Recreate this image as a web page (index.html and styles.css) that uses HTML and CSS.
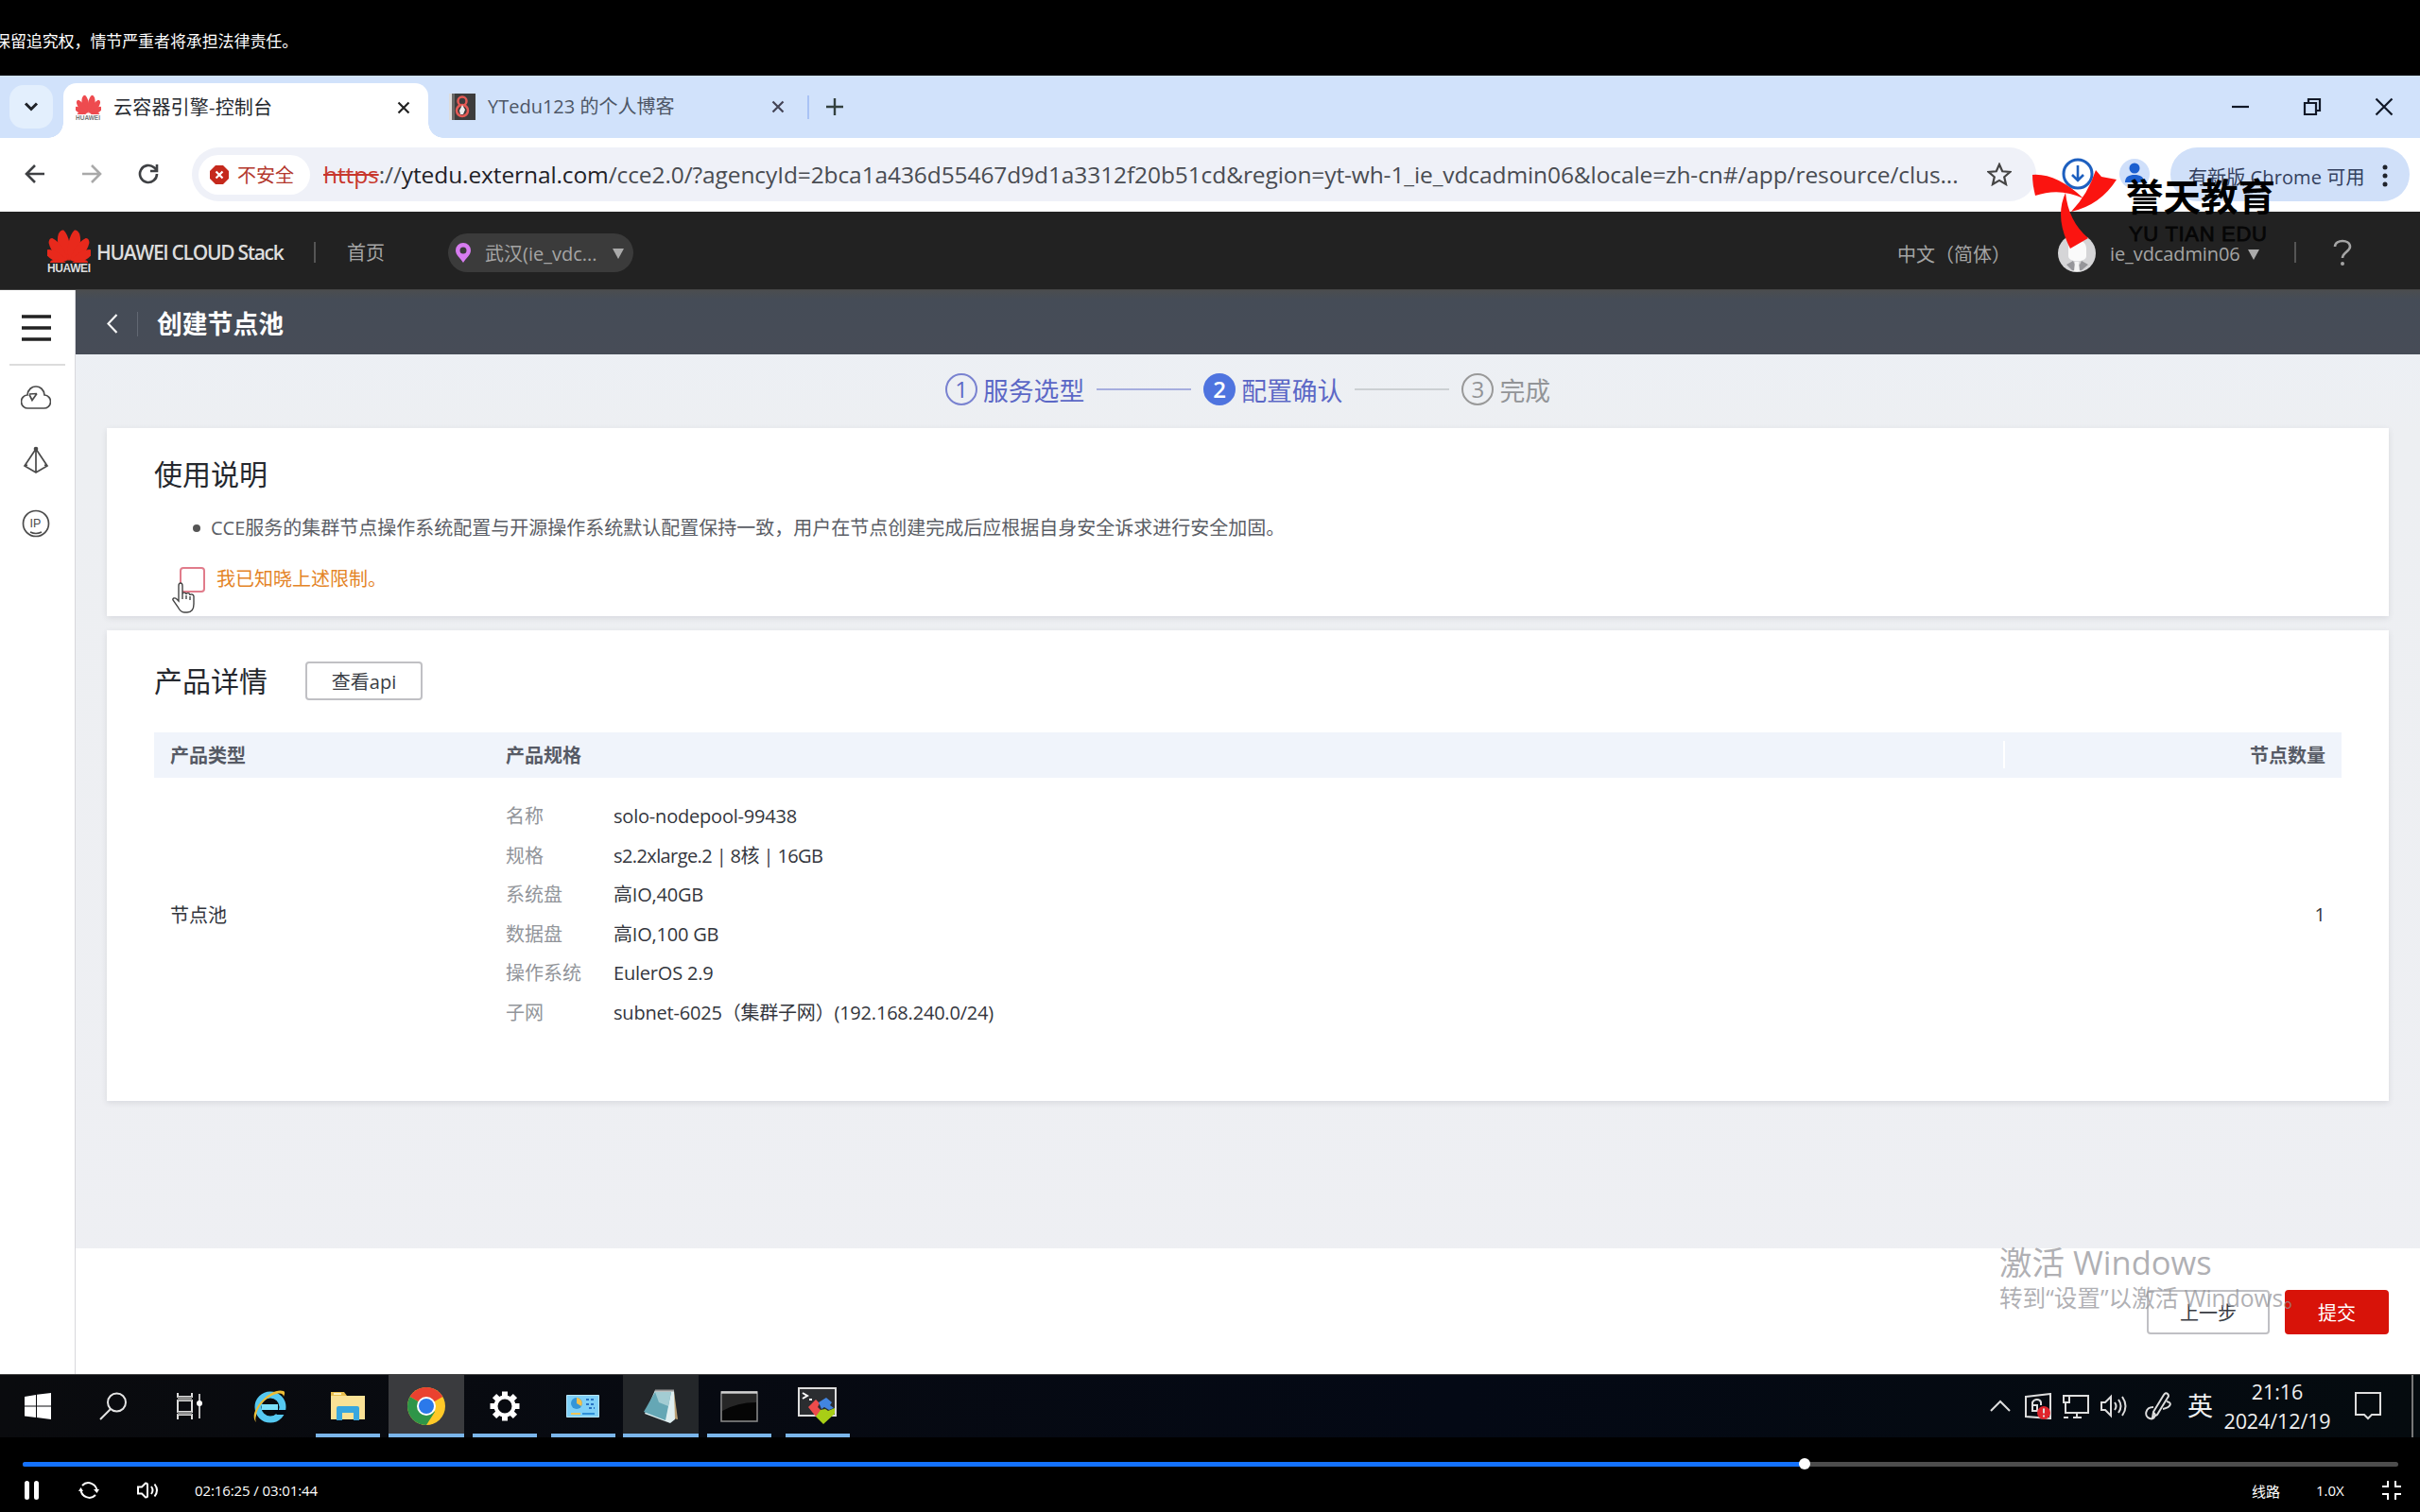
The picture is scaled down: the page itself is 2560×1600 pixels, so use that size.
FILE: index.html
```html
<!DOCTYPE html>
<html lang="zh-CN">
<head>
<meta charset="utf-8">
<title>云容器引擎-控制台</title>
<link rel="stylesheet" href="styles.css">
</head>
<body>
<svg class="defs" width="0" height="0">
  <symbol id="flower" viewBox="0 0 46 36" preserveAspectRatio="none">
    <g id="half">
      <path transform="translate(22.5 34) rotate(-11)" d="M0 0C-7-9-10-21-5-30Q-2-34 1-33C6-26 6-10 0 0Z"/>
      <path transform="translate(21.5 34) rotate(-36)" d="M0 0C-7-8-9-18-5-27Q-2-31 1-29C5-22 5-9 0 0Z"/>
      <path transform="translate(20.5 34) rotate(-61)" d="M0 0C-6-6-8-14-5-21Q-2-25 1-23C4-17 4-7 0 0Z"/>
      <path transform="translate(19.500 35.500) rotate(-86)" d="M0 0C-4-4-5-10-3-15Q-1-18 1-15C3-11 2-4 0 0Z"/>
    </g>
    <use href="#half" transform="translate(46 0) scale(-1 1)"/>
  </symbol>
</svg>
<div class="notice"><span>保留追究权，情节严重者将承担法律责任。</span></div>

<div class="tabs">
  <div class="tab-search"><svg width="16" height="10" viewBox="0 0 16 10"><path d="M2 1.5l6 6 6-6" fill="none" stroke="#1f2228" stroke-width="3"/></svg></div>
  <div class="tab active">
    <div class="fav"><svg width="27" height="21"><use href="#flower"/></svg><b>HUAWEI</b></div>
    <span class="tab-title">云容器引擎-控制台</span>
    <svg class="x" width="14" height="14" viewBox="0 0 14 14"><path d="M1.500 1.500l11 11M12.500 1.500l-11 11"/></svg>
  </div>
  <div class="tab second">
    <svg width="28" height="28" viewBox="0 0 28 28"><path fill="#3d3c3c" d="M0 0h28v28H0z"/><path fill="#ddd" d="M0 0h3v28H0z"/><path fill="#6b6968" d="M3 0h3v28H3z"/><g fill="none" stroke="#e55a55" stroke-width="2.500"><circle cx="14" cy="8" r="4.500"/><circle cx="14" cy="18" r="6"/></g><path d="M14 12l3 5-2 5h-3l-1-4z" fill="#eee"/></svg>
    <span class="tab-title">YTedu123 的个人博客</span>
    <svg class="x" width="14" height="14" viewBox="0 0 14 14"><path d="M1.500 1.500l11 11M12.500 1.500l-11 11"/></svg>
  </div>
  <i class="tab-sep"></i>
  <svg class="plus" width="18" height="18" viewBox="0 0 18 18"><path d="M9 0v18M0 9h18"/></svg>
  <div class="win">
    <svg width="20" height="20" viewBox="0 0 20 20"><path d="M1 10h18"/></svg>
    <svg width="20" height="20" viewBox="0 0 20 20"><path d="M2 6h12v12H2zM6 6V2h12v12h-4"/></svg>
    <svg width="20" height="20" viewBox="0 0 20 20"><path d="M1.500 1.500l17 17M18.500 1.500l-17 17"/></svg>
  </div>
</div>

<div class="toolbar">
  <svg class="nav-ic" width="22" height="22" viewBox="0 0 22 22"><path d="M21 11H2M11 2L2 11l9 9"/></svg>
  <svg class="nav-ic dim" width="22" height="22" viewBox="0 0 22 22"><path d="M1 11h19M11 2l9 9-9 9"/></svg>
  <svg class="nav-ic" width="22" height="22" viewBox="0 0 22 22"><path d="M20 11a9 9 0 1 1-3-6.700L20 7M20 1v7h-7"/></svg>
  <div class="omni">
    <div class="chip">
      <svg width="20" height="20" viewBox="0 0 20 20"><path fill="#c5291c" d="M6 0h8l6 6v8l-6 6H6l-6-6V6z"/><path d="M6.500 6.500l7 7M13.500 6.500l-7 7" stroke="#fff" stroke-width="2.200"/></svg>
      <span>不安全</span>
    </div>
    <div class="url"><s>https</s>://<b>ytedu.external.com</b>/cce2.0/?agencyId=2bca1a436d55467d9d1a3312f20b51cd&amp;region=yt-wh-1_ie_vdcadmin06&amp;locale=zh-cn#/app/resource/clus...</div>
    <svg width="26" height="25" viewBox="0 0 26 25"><path d="M13 2l3.200 7.300 8 .7-6 5.300 1.800 7.700-7-4.100-7 4.100 1.800-7.700-6-5.300 8-.7z" fill="none" stroke="#444" stroke-width="2.200"/></svg>
  </div>
  <svg class="dl" width="34" height="34" viewBox="0 0 34 34"><g fill="none" stroke="#1d5fbf" stroke-width="3"><circle cx="17" cy="17" r="15"/><path stroke-width="2.600" d="M17 8v16M11 18l6 6 6-6"/></g></svg>
  <svg class="me" width="32" height="32" viewBox="0 0 32 32"><circle cx="16" cy="16" r="16" fill="#cfdffa"/><circle cx="16" cy="10" r="5.500" fill="#1b5fd0"/><path d="M6 25c0-6 4-8 10-8s10 2 10 8z" fill="#1b5fd0"/></svg>
  <div class="update"><span>有新版 Chrome 可用</span><svg width="6" height="24" viewBox="0 0 6 24" fill="#20242c"><circle cx="3" cy="3" r="2.500"/><circle cx="3" cy="12" r="2.500"/><circle cx="3" cy="21" r="2.500"/></svg></div>
</div>

<div class="cloudbar">
  <div class="logo"><svg width="46" height="36"><use href="#flower"/></svg><b>HUAWEI</b></div>
  <span class="brand">HUAWEI CLOUD Stack</span>
  <i class="bar-sep"></i>
  <span class="home">首页</span>
  <div class="region">
    <svg width="16" height="21" viewBox="0 0 16 21"><path fill="#d77cf0" fill-rule="evenodd" d="M8 0a8 8 0 0 1 8 8c0 5-5 8-8 13C5 16 0 13 0 8a8 8 0 0 1 8-8zm0 4.500a3.500 3.500 0 1 0 0 7 3.500 3.500 0 0 0 0-7z"/></svg>
    <span>武汉(ie_vdc...</span><i class="caret"></i>
  </div>
  <span class="lang">中文（简体）</span>
  <svg class="avatar" width="40" height="40" viewBox="0 0 40 40"><circle cx="20" cy="20" r="20" fill="#d5d5d7"/><path fill="#fafafa" d="M11 15c0-12 19-12 19 0v8c0 7-19 7-19 0z"/><path fill="#96969a" d="M9 32l7-4 2 4 2-2 3 2 2-4 7 4-7 6H15z"/><path fill="#f4f4f4" d="M18 29h4l1 10h-6z"/></svg>
  <span class="user">ie_vdcadmin06</span><i class="caret user-caret"></i>
  <i class="bar-sep right-sep"></i>
  <svg class="help" width="20" height="28" viewBox="0 0 20 28"><path d="M2 8c0-8 16-8 16 0 0 5-8 6-8 12" fill="none" stroke="#a5a5a5" stroke-width="2.600"/><circle cx="10" cy="26" r="2" fill="#a5a5a5"/></svg>
</div>

<div class="app">
  <div class="side">
    <svg class="burger" width="31" height="28" viewBox="0 0 31 28"><path d="M0 2h31M0 14h31M0 26h31" stroke="#222" stroke-width="3.300"/></svg>
    <i class="side-line"></i>
    <svg class="side-ic" width="32" height="28" viewBox="0 0 32 28"><path d="M8 25a7 7 0 0 1-1-14c1-12 17-12 18 0a7 7 0 0 1-1 14zM9 10l8-.5M17 9.500l-5 7-3-6"/></svg>
    <svg class="side-ic" width="28" height="30" viewBox="0 0 28 30"><path d="M14 3L2 21l12 7 12-7zM14 3v25"/><path d="M2 21l3-1M26 21l-3-1"/><circle cx="14" cy="3" r="1.500" fill="#444"/></svg>
    <svg class="side-ic ip" width="30" height="30" viewBox="0 0 30 30"><circle cx="15" cy="15" r="13.500"/><path d="M9 24c4 2 8 2 12 0"/><text x="8.500" y="19">IP</text></svg>
  </div>
  <div class="main">
    <div class="page-head">
      <svg width="12" height="21" viewBox="0 0 12 21"><path d="M10.500 1L1.500 10.500l9 9.500" fill="none" stroke="#f5f5f5" stroke-width="2.200"/></svg>
      <i></i><h1>创建节点池</h1>
    </div>
    <div class="steps">
      <b class="n">1</b><span>服务选型</span><i></i>
      <b class="n on">2</b><span>配置确认</span><i class="todo"></i>
      <b class="n off">3</b><span class="off">完成</span>
    </div>
    <div class="card note">
      <h2>使用说明</h2>
      <ul><li><span>CCE服务的集群节点操作系统配置与开源操作系统默认配置保持一致，用户在节点创建完成后应根据自身安全诉求进行安全加固。</span></li></ul>
      <div class="agree"><i class="box"></i><span>我已知晓上述限制。</span>
        <svg class="cursor" width="28" height="34" viewBox="0 0 28 34"><path d="M8 20V4c0-4 4-4 4 0v9c0-3 4-2 4 0 0-2 4-2 4 1 0-2 4-1 4 1v8c0 6-3 9-7 9h-3c-3 0-5-2-7-6l-5-7c-1-2 2-3 4-1zM12 13v5M16 14v4M20 15v4" fill="#fff" stroke="#444" stroke-width="1.400"/></svg>
      </div>
    </div>
    <div class="card detail">
      <div class="detail-head"><h2>产品详情</h2><button>查看api</button></div>
      <div class="thead"><span>产品类型</span><span>产品规格</span><span class="count">节点数量</span></div>
      <div class="tbody">
        <span class="type">节点池</span>
        <dl>
          <dt>名称</dt><dd>solo-nodepool-99438</dd>
          <dt>规格</dt><dd class="flavor">s2.2xlarge.2 | 8核 | 16GB</dd>
          <dt>系统盘</dt><dd>高IO,40GB</dd>
          <dt>数据盘</dt><dd>高IO,100 GB</dd>
          <dt>操作系统</dt><dd>EulerOS 2.9</dd>
          <dt>子网</dt><dd>subnet-6025（集群子网）(192.168.240.0/24)</dd>
        </dl>
        <span class="num">1</span>
      </div>
    </div>
    <div class="footer"><button class="prev">上一步</button><button class="submit">提交</button></div>
  </div>
</div>

<div class="taskbar">
  <div class="t start"><svg width="28" height="28" viewBox="0 0 28 28" fill="#fff"><path d="M0 4l12-2v11.500H0zM13 1.800L28 0v13.500H13zM0 14.500h12V26L0 24.500zM13 14.500h15V28l-15-2z"/></svg></div>
  <div class="t"><svg width="30" height="30" viewBox="0 0 30 30" fill="none" stroke="#e4e4e4" stroke-width="2"><circle cx="18.500" cy="11" r="9.500"/><path d="M12 18L1 29"/></svg></div>
  <div class="t view"><svg width="28" height="28" viewBox="0 0 28 28"><path d="M2 0v4h15V0M2 28v-5h15v5M2 8v12h15V8z" fill="none" stroke="#ddd" stroke-width="2"/><path d="M2 4h15v4H2zM2 20h15v3H2z" fill="#8c8c8c"/><path d="M25 1v26" stroke="#bbb" stroke-width="2"/><circle cx="25" cy="11" r="3" fill="#fff"/></svg></div>
  <div class="t"><svg width="38" height="36" viewBox="0 0 38 36"><circle cx="20" cy="19" r="13" fill="none" stroke="#55c8f1" stroke-width="7"/><path d="M11 16h17v6H11z" fill="#7be0fa"/><path d="M22 22h15v5H27z" fill="#030711"/><path d="M5 35C-5 25 20-3 34 2c2 1 1 4 0 6 0-10-27 2-29 20-1 3-1 5 0 7z" fill="#edbd36"/></svg></div>
  <div class="t run"><svg width="36" height="30" viewBox="0 0 36 30"><path fill="#e9bf4e" d="M0 0h14l3 4h19v24H0z"/><path fill="#fae296" d="M0 4h36v25H0z"/><path fill="#38a7df" d="M6 30V17q0-2 2-2h20q2 0 2 2v13h-6v-8H12v8z"/><path d="M3 2h8" stroke="#fff3c0" stroke-width="2"/></svg></div>
  <div class="t run sel"><svg width="42" height="42" viewBox="0 0 42 42"><circle cx="21" cy="21" r="20" fill="#ffc928"/><path fill="#ea4130" d="M21 21L3.700 11a20 20 0 0 1 34.600 0z"/><path fill="#2e9548" d="M21 21L3.700 11A20 20 0 0 0 21 41l9-14z"/><circle cx="21" cy="21" r="10" fill="#fff"/><circle cx="21" cy="21" r="8" fill="#2b79ea"/></svg></div>
  <div class="t run"><svg width="32" height="32" viewBox="-16 -16 32 32"><circle r="9.500" fill="none" stroke="#fff" stroke-width="4"/><g fill="#fff"><path id="tooth" d="M-3-15.500h6V-10h-6zM-3 10h6v5.500h-6z"/><use href="#tooth" transform="rotate(45)"/><use href="#tooth" transform="rotate(90)"/><use href="#tooth" transform="rotate(135)"/></g></svg></div>
  <div class="t run"><svg width="35" height="24" viewBox="0 0 35 24"><path fill="#7fd0f7" stroke="#b9e6fb" d="M.5.500h34v23H.5z"/><circle cx="11" cy="9" r="6" fill="#3496d8"/><path d="M11 9V3a6 6 0 0 1 5 9z" fill="#f2c14c"/><path d="M21 5h9M21 10h9M24 14h6" stroke="#2873c4" stroke-width="2" stroke-dasharray="3 2"/><path d="M5 20h10" stroke="#eec45a" stroke-width="2"/><path d="M17 20h13" stroke="#2e8fd8" stroke-width="2"/></svg></div>
  <div class="t run sel notes"><svg width="38" height="36" viewBox="0 0 38 36"><path fill="#b99e73" d="M33 2l4 30-5-1z"/><path fill="#dfeef0" d="M13 1l20 1 1 30-5 4L2 26z"/><path fill="#65a7b5" d="M13 3h17l-6 30L1 24z"/><path fill="#a3ccd3" d="M13 3h17l-3 15-10-4z"/><path d="M13 1.500h20" stroke="#999" stroke-width="2"/></svg></div>
  <div class="t run"><svg width="40" height="33" viewBox="0 0 40 33"><path fill="#050505" stroke="#8d8d8d" stroke-width="1.500" d="M1 1h38v31H1z"/><path fill="#262626" d="M2 3h36v9Q18 12 2 21z"/><path d="M1 1.500h38" stroke="#d0d0d0" stroke-width="2.500"/></svg></div>
  <div class="t run"><svg width="41" height="40" viewBox="0 0 41 40"><path fill="#2b2d30" stroke="#ddd" stroke-width="2" d="M1 1h39v29H1z"/><path d="M5 6l5 3-5 3M12 13h3" fill="none" stroke="#fff" stroke-width="2"/><path fill="#ee4b4b" d="M11 21l8-8 4 4-2 4 4 4-6 6z"/><path fill="#4285e0" d="M22 16l8-5 6 5-2 3 4 3-5 2-5-3-3 2z"/><path fill="#a8ce16" d="M24 24l5-1 3 2 7-3v6L27 39l-8-8z"/></svg></div>
  <div class="tray">
    <svg class="up" width="24" height="14" viewBox="0 0 24 14"><path d="M2 12L12 2l10 10"/></svg>
    <svg class="def" width="28" height="28" viewBox="0 0 28 28"><path d="M1 4l26-3v26L1 25z"/><path d="M8 13v-3c2-4 8-4 9 0v3M8 13h5v6H8z"/><circle cx="20" cy="21" r="7" fill="#e0242c" stroke="none"/><path d="M20 16.500v5M20 23.500v2"/></svg>
    <svg class="mon" width="28" height="26" viewBox="0 0 28 26"><path d="M7 2h20v18H3V10M1 2h6v7H1zM11 25h9M15 20v5M1 25h5"/></svg>
    <svg class="spk" width="28" height="26" viewBox="0 0 28 26"><path d="M1 9h4l6-6v20l-6-6H1zM15 9q3 4 0 8M19 6q5 7 0 14M23 3q7 10 0 20"/></svg>
    <svg class="pen" width="28" height="30" viewBox="0 0 28 30"><path d="M9 21L20 3q2-3 4-1t0 4L13 24l-5 3zM9 16c-9 0-10 10-4 12s7-6 4-6M23 10c6 1 5 6-4 8"/></svg>
    <span class="ime">英</span>
    <div class="clock"><span>21:16</span><span>2024/12/19</span></div>
    <svg class="msg" width="28" height="30" viewBox="0 0 28 30"><path d="M1 1h26v23h-9l-4 4-4-4H1z"/></svg>
    <i class="peek"></i>
  </div>
</div>

<div class="player">
  <div class="track"><div class="done" style="width:75%"><i></i></div></div>
  <div class="controls">
    <svg width="16" height="20" viewBox="0 0 16 20"><path d="M2.500 2.500v15M12.500 2.500v15" stroke="#fff" stroke-width="5" stroke-linecap="round"/></svg>
    <svg class="loop" width="22" height="20" viewBox="0 0 22 20"><g fill="none" stroke="#fff" stroke-width="2"><path d="M4 5a9 9 0 0 1 15.500 6M18 15A9 9 0 0 1 2.500 9"/></g><path fill="#fff" d="M16 9h6l-2.500 4zM0 11h5L2.500 7z"/></svg>
    <svg class="vol" width="23" height="18" viewBox="0 0 23 18"><path d="M1 5.500h4L9 1.500q2 0 2 1.500v12q0 1.500-2 1.500l-4-4H1zM15 5q3 4 0 8M18.500 2.500q5 6.500 0 13" fill="none" stroke="#fff" stroke-width="2"/></svg>
    <span class="time">02:16:25 / 03:01:44</span>
    <span class="line">线路</span><span class="rate">1.0X</span>
    <svg class="shrink" width="20" height="20" viewBox="0 0 20 20"><path d="M6 0v6H0M14 0v6h6M6 20v-6H0M14 20v-6h6" fill="none" stroke="#fff" stroke-width="2"/></svg>
  </div>
</div>

<div class="activate"><p>激活 Windows</p><p class="small">转到“设置”以激活 Windows。</p></div>
<div class="channel">
  <svg width="90" height="84" viewBox="0 0 90 84" fill="#fb1410"><path d="M1 5q25-2 54 25-25-12-51-3Q1 15 1 5z"/><path d="M68 0l6 7 16 3Q73 37 42 44 60 25 68 0z"/><path d="M36 24q3 30 24 48L41 83Q24 50 36 24z"/></svg>
  <div class="channel-name"><b>誉天教育</b><span>YU TIAN EDU</span></div>
</div>
</body>
</html>
```
FILE: styles.css
```css
* { box-sizing: border-box; }
body {
  margin: 0; width: 2560px; height: 1600px; overflow: hidden; background: #000;
  position: relative; display: flex; flex-direction: column;
  font-family: "Open Sans", "Noto Sans CJK SC", sans-serif;
  font-size: 20px; color: #33363d; white-space: nowrap;
}
h1, h2, p, ul, dl, dd { margin: 0; padding: 0; font-weight: 400; }
i { font-style: normal; display: block; }
svg { display: block; flex: none; }
span { flex: none; }
.defs { position: absolute; }

.notice { height: 80px; flex: none; padding-top: 31px; font-size: 17px; line-height: 26px; color: #fff; letter-spacing: -.1px; }
.notice span { margin-left: -6px; }

.tabs { height: 66px; flex: none; background: #d1e2fb; display: flex; align-items: center; }
.tab-search { width: 46px; height: 46px; margin-left: 10px; border-radius: 15px; background: #e3effd; display: flex; align-items: center; justify-content: center; }
.tab { display: flex; align-items: center; }
.tab.active {
  position: relative; width: 386px; height: 58px; margin: 8px 0 0 11px; padding: 0 19px 6px 13px;
  background: #fff; border-radius: 14px 14px 0 0;
}
.tab.active::before, .tab.active::after { content: ""; position: absolute; bottom: 0; width: 16px; height: 16px; }
.tab.active::before { left: -16px; background: radial-gradient(circle at 0 0, transparent 15.500px, #fff 16px); }
.tab.active::after { right: -16px; background: radial-gradient(circle at 100% 0, transparent 15.500px, #fff 16px); }
.fav { width: 27px; }
.fav svg { fill: #ee4b4f; }
.fav b { display: block; font: 700 6.500px/7px "Liberation Sans", sans-serif; color: #777; }
.tab-title { margin-left: 13px; line-height: 28px; color: #25282e; letter-spacing: .2px; }
.x { margin-left: auto; fill: none; stroke: #222; stroke-width: 2.200; }
.second { margin-left: 22px; width: 355px; }
.second .tab-title { color: #4d5666; letter-spacing: 0; }
.second .x { stroke: #445; }
.tab-sep { width: 2px; height: 25px; margin-left: 24px; background: #a9c3f5; }
.plus { margin-left: 18px; stroke: #33403f; stroke-width: 2.400; }
.win { margin-left: auto; padding-right: 28px; display: flex; gap: 56px; }
.win svg { fill: none; stroke: #111827; stroke-width: 2.200; }

.toolbar { height: 78px; flex: none; background: #fff; display: flex; align-items: center; padding: 0 0 2px 26px; }
.nav-ic { fill: none; stroke: #3f4144; stroke-width: 2.600; margin-right: 38px; }
.dim { stroke: #a9a9a9; }
.omni { width: 1951px; height: 57px; margin: 1px 0 0 -3px; background: #eff1f8; border-radius: 29px; display: flex; align-items: center; padding-left: 7px; }
.chip { width: 118px; height: 42px; background: #fff; border-radius: 21px; display: flex; align-items: center; gap: 9px; padding-left: 12px; color: #b3382d; }
.url { width: 1760px; margin-left: 14px; font-size: 24.500px; line-height: 32px; color: #494c52; letter-spacing: -.1px; }
.url s { color: #c8372d; }
.url b { font-weight: 400; color: #1f2227; }
.dl { margin-left: 27px; }
.me { margin-left: 27px; }
.update { width: 253px; height: 57px; margin-left: 22px; border-radius: 29px; background: #d0e0f9; display: flex; align-items: center; padding: 4px 0 0 19px; color: #33405e; }
.update span { width: 205px; letter-spacing: .1px; }

.cloudbar { height: 83px; flex: none; background: #222; display: flex; align-items: center; padding-top: 3px; color: #a5a5a5; border-bottom: 1px solid #444; }
.logo { width: 47px; margin-left: 50px; fill: #e8291c; }
.logo b { display: block; font: 700 12px/13px "Liberation Sans", sans-serif; color: #ddd; letter-spacing: -.4px; }
.brand { width: 198px; margin-left: 5px; font-size: 21px; font-weight: 600; color: #ddd; letter-spacing: -1.300px; }
.bar-sep { width: 2px; height: 22px; margin-left: 32px; background: #555; }
.home { margin-left: 33px; }
.region { width: 196px; height: 41px; margin: 2px 0 0 67px; border-radius: 21px; background: #3b3b3b; display: flex; align-items: center; padding-left: 8px; }
.region span { width: 126px; margin-left: 15px; }
.caret { border: 6px solid transparent; border-top: 11px solid #aaa; border-bottom: 0; }
.region .caret { margin: 2px 0 0 9px; }
.lang { width: 120px; margin: 3px 0 0 1337px; }
.avatar { margin: 2px 0 0 50px; }
.user { width: 136px; margin: 3px 0 0 15px; letter-spacing: -.1px; }
.user-caret { margin: 5px 0 0 10px; }
.right-sep { margin-left: 37px; }
.help { margin-left: 39px; }

.app { height: 1147px; flex: none; display: flex; }
.side { width: 80px; background: #fff; border-right: 1px solid #d8d8dc; display: flex; flex-direction: column; align-items: center; }
.burger { margin: 26px 2px 0 0; }
.side-line { width: 59px; height: 2px; margin: 24px 0 20px; background: #dcdcdc; }
.side-ic { margin: 0 3px 37px 0; fill: none; stroke: #4b4b4b; stroke-width: 1.700; }
.ip text { font: 12.500px "Liberation Sans", sans-serif; fill: #4b4b4b; stroke: none; }
.main { flex: 1; background: linear-gradient(#ecf0f6, #edeff2 150px, #eeeff3); display: flex; flex-direction: column; }
.page-head { height: 68px; flex: none; background: linear-gradient(#4b4d4f, #454c57 10px, #474c57); display: flex; align-items: center; padding: 3px 0 0 33px; color: #fff; }
.page-head i { width: 1px; height: 26px; margin: 0 20px; background: #626873; }
.page-head h1 { font-size: 26.800px; font-weight: 700; line-height: 34px; }
.steps { height: 78px; flex: none; display: flex; align-items: center; padding: 0 0 5px 920px; color: #5c68c6; font-size: 26.800px; }
.steps span { margin: 5px 0 0 6px; line-height: 34px; }
.n { width: 34px; height: 34px; border: 2px solid #7982d0; border-radius: 50%; font: 400 24px/30px "Open Sans", sans-serif; text-align: center; flex: none; }
.n.on { background: #4f74df; border-color: #4f74df; color: #fff; font-weight: 600; }
.n.off { border-color: #999; }
.off { color: #929497; }
.steps i { width: 100px; height: 2px; background: #a6aede; margin: 0 13px; }
.steps i.todo { background: #ccd0d3; }
.card { width: 2414px; margin-left: 33px; flex: none; background: #fff; padding: 0 50px; box-shadow: 0 2px 6px rgba(60, 60, 70, .12); }
.card h2 { font-size: 30px; line-height: 40px; color: #25282e; }
.note { height: 199px; padding-top: 29px; }
.note ul { list-style: none; margin-top: 21px; padding-left: 41px; }
.note li { display: flex; align-items: center; gap: 11px; line-height: 32px; color: #5b5e66; }
.note li::before { content: ""; width: 8px; height: 8px; border-radius: 50%; background: #555; }
.agree { position: relative; display: flex; align-items: center; gap: 12px; margin-top: 20px; padding-left: 27px; line-height: 36px; color: #e48427; }
.box { width: 27px; height: 27px; border: 2px solid #e17c8b; border-radius: 4px; }
.cursor { position: absolute; left: 18px; top: 21px; }
.detail { height: 498px; margin-top: 15px; padding-top: 33px; }
.detail-head { display: flex; align-items: center; gap: 40px; }
button { font: inherit; padding: 0; border: 2px solid #c0c0c4; border-radius: 4px; background: #fff; color: #3a3d44; }
.detail-head button { width: 124px; height: 41px; }
.thead { height: 48px; margin-top: 34px; background: #f0f4fb; display: grid; grid-template-columns: 355px 1584px 1fr; align-items: center; padding: 0 17px 2px; font-weight: 700; color: #565a65; }
.thead .count { text-align: right; border-left: 2px solid #fff; }
.tbody { display: flex; align-items: center; padding: 20px 17px 0; }
.type { width: 355px; }
dl { display: grid; grid-template-columns: 114px auto; line-height: 41.600px; }
dt { color: #92959a; }
dd { letter-spacing: -.2px; }
.flavor { letter-spacing: -.6px; }
.num { margin-left: auto; }
.footer { height: 133px; margin-top: auto; flex: none; background: #fff; display: flex; justify-content: flex-end; gap: 16px; padding: 44px 33px 0; }
.footer button { height: 47px; }
.prev { width: 130px; }
.footer .submit { width: 110px; background: #d81309; border-color: #d81309; color: #fff; }

.taskbar { height: 67px; flex: none; background: linear-gradient(90deg, #0a0b0e, #040915 60%, #050b0f); border-top: 1px solid #444; display: flex; }
.t { position: relative; width: 68px; margin-right: 14.500px; display: flex; align-items: center; justify-content: center; }
.start { margin-left: 6px; margin-right: 12px; }
.view { padding-right: 5px; }
.run::after { content: ""; position: absolute; left: 0; right: 0; bottom: 0; height: 4px; background: #7ab5ea; }
.sel { width: 80px; background: #3a3b3e; margin-left: -5px; margin-right: 9px; }
.notes { background: #24272a; margin-left: -6px; }
.tray { margin-left: auto; display: flex; align-items: center; color: #f0f0f0; }
.tray svg { fill: none; stroke: #ddd; stroke-width: 2; }
.up { margin-right: 14px; }
.def { margin-right: 12px; }
.mon { margin-right: 12px; }
.spk { margin-right: 19px; }
.pen { margin-right: 17px; }
.ime { width: 28px; font-size: 27px; line-height: 34px; }
.clock { width: 114px; margin: 0 25px 0 10px; display: flex; flex-direction: column; align-items: center; font-size: 21.500px; line-height: 31px; letter-spacing: -.1px; }
.peek { width: 2px; height: 66px; background: #777; margin: 0 7px 0 32px; }

.player { height: 79px; flex: none; padding: 26px 23px 0 24px; color: #fff; }
.track { height: 5px; border-radius: 3px; background: #4d4d4d; }
.done { height: 5px; border-radius: 3px; background: #1472ff; position: relative; }
.done i { position: absolute; right: -6px; top: -4px; width: 12px; height: 12px; border-radius: 50%; background: #fff; }
.controls { display: flex; align-items: center; height: 48px; padding: 2px 0 0 2px; font-size: 15px; }
.loop { margin-left: 41px; }
.vol { margin-left: 40px; }
.time { margin-left: 38px; letter-spacing: -.1px; }
.line { margin-left: auto; }
.rate { width: 30px; margin-left: 38px; }
.shrink { margin: 0 -3px 0 40px; }

.activate { position: absolute; left: 2115px; top: 1312px; color: rgba(150, 150, 155, .75); font-size: 34.500px; line-height: 48px; }
.activate .small { font-size: 24.600px; line-height: 28px; }
.channel { position: absolute; left: 2149px; top: 180px; display: flex; }
.channel-name { margin: 3px 0 0 10px; color: #000; }
.channel-name b { display: block; font-size: 39.500px; line-height: 50px; }
.channel-name span { display: block; margin: 3px 0 0 3px; font: 22px/24px "Liberation Sans", sans-serif; letter-spacing: .7px; color: #060606; -webkit-text-stroke: .8px #060606; }
```
